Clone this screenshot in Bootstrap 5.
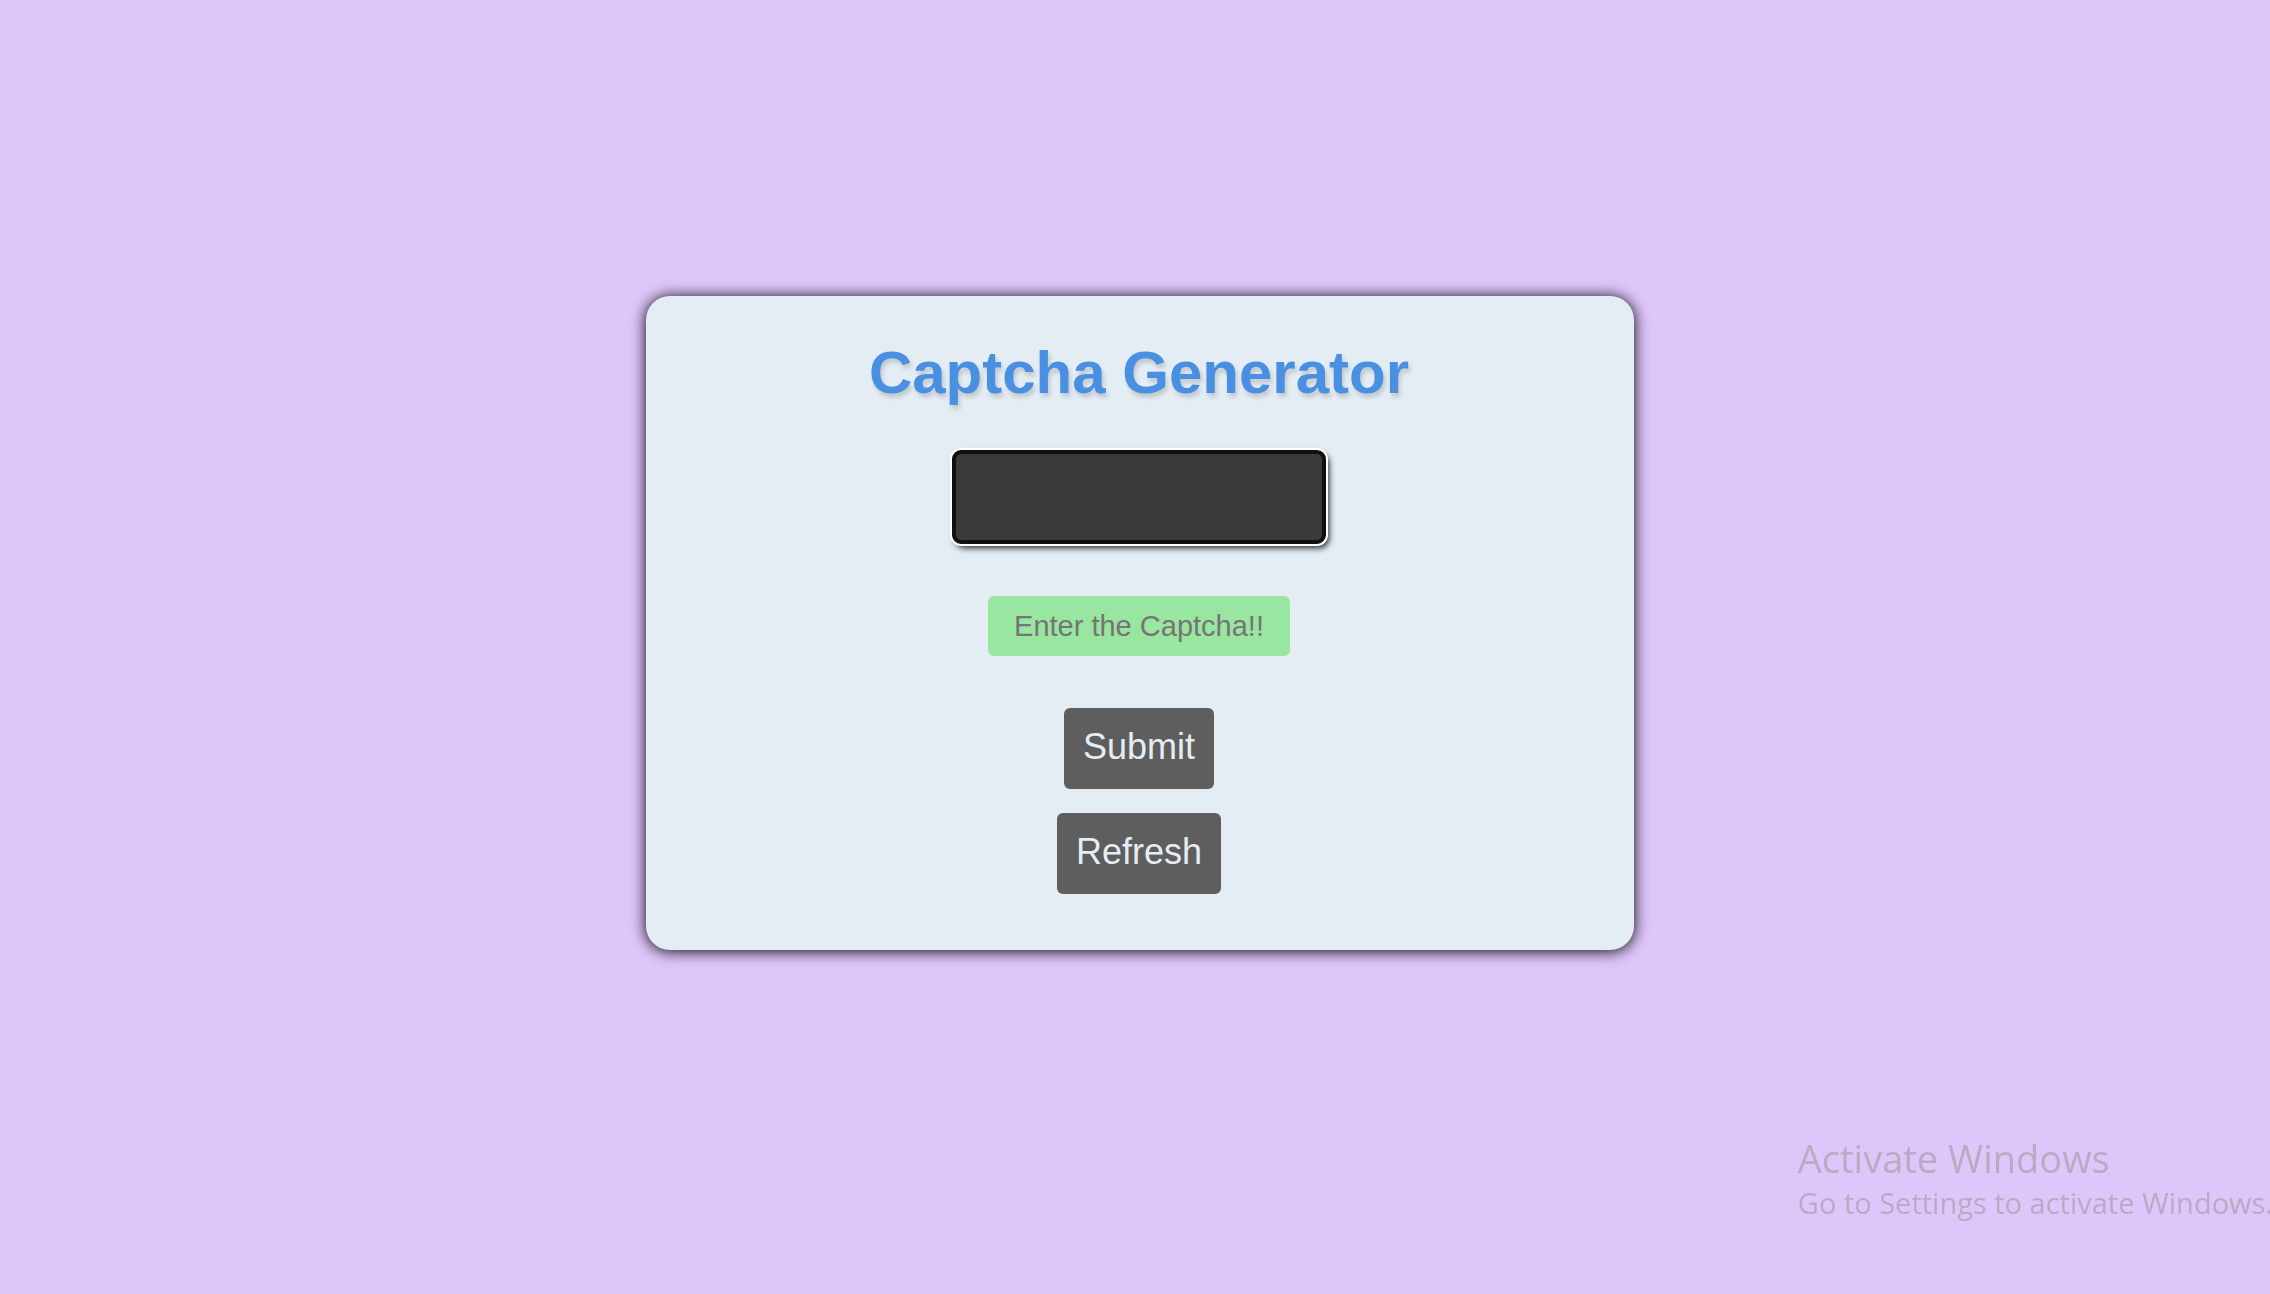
<!DOCTYPE html>
<html lang="en">
<head>
<meta charset="utf-8">
<meta name="viewport" content="width=device-width, initial-scale=1">
<title>Captcha Generator</title>
<link href="https://cdn.jsdelivr.net/npm/bootstrap@5.3.0/dist/css/bootstrap.min.css" rel="stylesheet">
<style>
  body { background: #dec5fa; font-family: "Liberation Sans", Arial, sans-serif; }
  .stage { padding: 0 0 48px 10px; }
  .captcha-panel { width: 988px; max-width: 100%; padding: 41px 26px 56px 24px; border-radius: 24px; background: #e5edf4; box-shadow: 0 1px 15px #000; }
  .captcha-title { font-size: 60px; line-height: 72px; font-weight: 700; color: #4a90e2; text-shadow: 2px 4px 4px rgba(0, 0, 0, .16); margin-bottom: 41px; }
  .captcha-code { width: 374px; max-width: 100%; height: 94px; border: 4px solid #101010; border-radius: 9px; background: #3a3a3a; color: #fff; font-size: 36px; outline: 0; box-shadow: 0 0 0 2px #fff, 3px 4px 6px rgba(0, 0, 0, .85); margin-bottom: 52px; }
  .captcha-entry { width: 302px; height: 60px; padding: 0 24px; border: 0; border-radius: 6px; background: #98e6a0; color: #333; font-size: 29px; margin-bottom: 52px; }
  .captcha-entry::placeholder { color: #757575; opacity: 1; }
  .captcha-btn { padding: 16px 19px 20px; border: 0; border-radius: 6px; background: #5e5e5e; color: #e5edf4; font-size: 36px; line-height: 45px; }
  .captcha-btn:hover { background: #4a4a4a; color: #fff; }
  .os-notice { right: -3px; bottom: 71px; color: #b6adc2; font-family: "Segoe UI", "Open Sans", sans-serif; pointer-events: none; }
  .notice-head { font-size: 38px; line-height: 50px; }
  .notice-text { font-size: 29px; line-height: 40px; }
</style>
<script src="https://cdn.jsdelivr.net/npm/bootstrap@5.3.0/dist/js/bootstrap.bundle.min.js"></script>
</head>
<body>
<main class="stage d-flex align-items-center justify-content-center min-vh-100">
  <form class="captcha-panel d-flex flex-column align-items-center">
    <h1 class="captcha-title text-center">Captcha Generator</h1>
    <input class="captcha-code text-center" type="text" aria-label="Generated captcha" readonly>
    <input class="captcha-entry text-center" type="text" aria-label="Enter the captcha" placeholder="Enter the Captcha!!">
    <div class="d-flex flex-column align-items-center gap-4">
      <button class="captcha-btn" type="submit">Submit</button>
      <button class="captcha-btn" type="button">Refresh</button>
    </div>
  </form>
</main>
<aside class="os-notice position-fixed text-nowrap">
  <div class="notice-head">Activate Windows</div>
  <div class="notice-text">Go to Settings to activate Windows.</div>
</aside>
</body>
</html>
